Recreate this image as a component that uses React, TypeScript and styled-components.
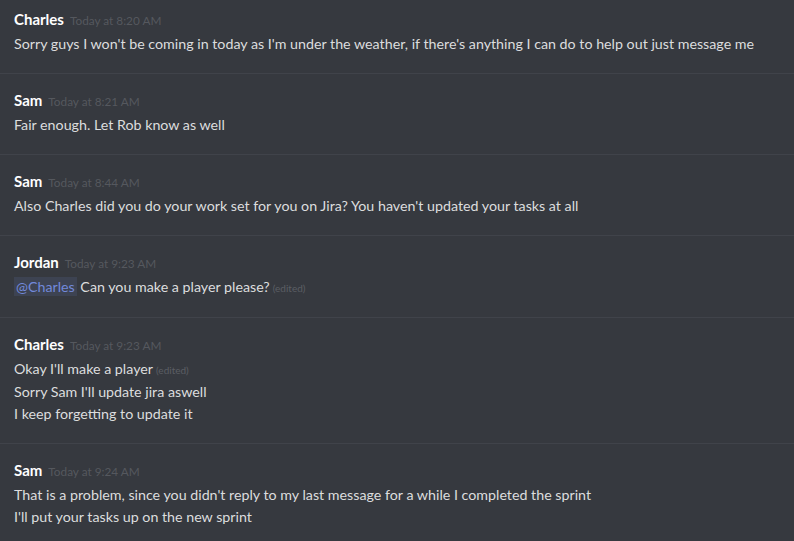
import React from "react";
import styled, { createGlobalStyle } from "styled-components";

const Global = createGlobalStyle`
  html, body { margin: 0; padding: 0; background: #36393f; }
  body { font-family: Lato, "Noto Sans", sans-serif; }
`;

const Page = styled.div`
  width: 794px;
  height: 541px;
  overflow: hidden;
  background: #36393f;
`;

const List = styled.div`
  display: flex;
  flex-direction: column;
  margin-top: -7px;
`;

const Group = styled.div`
  display: flex;
  flex-direction: column;
  padding: 16px 14px 18px;
  border-bottom: 1px solid #40434a;
`;

const Header = styled.div`
  display: flex;
  align-items: baseline;
  gap: 6px;
  height: 20px;
  line-height: 20px;
  margin-bottom: 4px;
`;

const Name = styled.span`
  color: #ffffff;
  font-weight: 700;
  font-size: 15px;
`;

const Time = styled.span`
  color: #55585e;
  font-size: 11.8px;
`;

const Line = styled.div`
  color: #dcddde;
  font-size: 14.25px;
  line-height: 22px;
  white-space: nowrap;
`;

const Mention = styled.span`
  color: #7289da;
  background: rgba(114, 137, 218, 0.12);
  padding: 1px 2px;
`;

const Edited = styled.span`
  color: #5b5e64;
  font-size: 10px;
  margin-left: 3px;
`;

type Msg = { name: string; time: string; lines: React.ReactNode[] };

const msgs: Msg[] = [
  {
    name: "Charles",
    time: "Today at 8:20 AM",
    lines: [
      "Sorry guys I won't be coming in today as I'm under the weather, if there's anything I can do to help out just message me",
    ],
  },
  { name: "Sam", time: "Today at 8:21 AM", lines: ["Fair enough. Let Rob know as well"] },
  {
    name: "Sam",
    time: "Today at 8:44 AM",
    lines: ["Also Charles did you do your work set for you on Jira? You haven't updated your tasks at all"],
  },
  {
    name: "Jordan",
    time: "Today at 9:23 AM",
    lines: [
      <>
        <Mention>@Charles</Mention> Can you make a player please?<Edited>(edited)</Edited>
      </>,
    ],
  },
  {
    name: "Charles",
    time: "Today at 9:23 AM",
    lines: [
      <>
        Okay I'll make a player<Edited>(edited)</Edited>
      </>,
      "Sorry Sam I'll update jira aswell",
      "I keep forgetting to update it",
    ],
  },
  {
    name: "Sam",
    time: "Today at 9:24 AM",
    lines: [
      "That is a problem, since you didn't reply to my last message for a while I completed the sprint",
      "I'll put your tasks up on the new sprint",
    ],
  },
];

export default function App() {
  return (
    <Page>
      <Global />
      <List>
        {msgs.map((m, i) => (
          <Group key={i}>
            <Header>
              <Name>{m.name}</Name>
              <Time>{m.time}</Time>
            </Header>
            {m.lines.map((l, j) => (
              <Line key={j}>{l}</Line>
            ))}
          </Group>
        ))}
      </List>
    </Page>
  );
}
